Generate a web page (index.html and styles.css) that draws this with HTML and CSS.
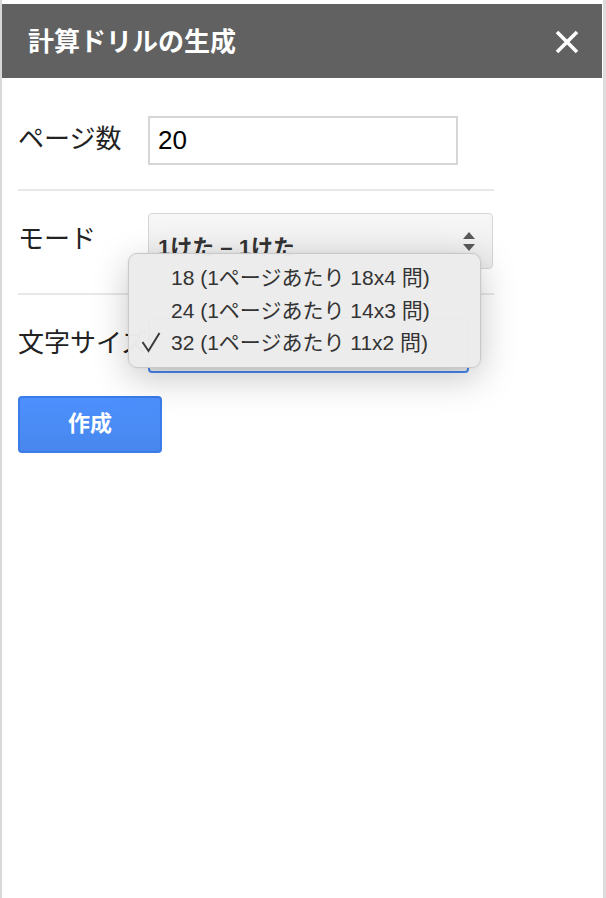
FILE: index.html
```html
<!DOCTYPE html>
<html lang="ja">
<head>
<meta charset="utf-8">
<title>計算ドリルの生成</title>
<link rel="stylesheet" href="styles.css">
</head>
<body>
<div class="frame">
  <header class="titlebar">
    <h1 class="title">計算ドリルの生成</h1>
    <svg class="close" width="24" height="24" viewBox="0 0 24 24" aria-label="閉じる">
      <path d="M2 2 L22 22 M22 2 L2 22" stroke="#fff" stroke-width="3.6" fill="none"/>
    </svg>
  </header>
  <main class="content">
    <div class="row">
      <span class="label">ページ数</span>
      <div class="input">20</div>
    </div>
    <div class="sep"></div>
    <div class="row">
      <span class="label">モード</span>
      <div class="select">
        <span class="select-text">1けた – 1けた</span>
        <svg class="spin" width="14" height="22" viewBox="0 0 14 22">
          <path d="M7 1 L13 8 L1 8 Z" fill="#5a5a5a"/>
          <path d="M1 13 L13 13 L7 20 Z" fill="#5a5a5a"/>
        </svg>
      </div>
    </div>
    <div class="sep"></div>
    <div class="row">
      <span class="label">文字サイズ</span>
      <div class="field">
        <div class="select focused"></div>
        <ul class="menu">
          <li class="item"><span class="check"></span>18 (1ページあたり 18x4 問)</li>
          <li class="item"><span class="check"></span>24 (1ページあたり 14x3 問)</li>
          <li class="item"><span class="check"><svg width="20" height="22" viewBox="0 0 20 22"><path d="M1.5 11 L7.5 20 L18.5 2" stroke="#3a3a3a" stroke-width="2" fill="none"/></svg></span>32 (1ページあたり 11x2 問)</li>
        </ul>
      </div>
    </div>
    <button class="action">作成</button>
  </main>
</div>
</body>
</html>
```
FILE: styles.css
```css
html, body {
  margin: 0;
  padding: 0;
  background: #fff;
}
body {
  font-family: "Liberation Sans", "Noto Sans CJK JP", sans-serif;
  color: #222;
}
.frame {
  box-sizing: border-box;
  min-height: 898px;
  border-left: 2px solid #d8d8d8;
  border-right: 3px solid #dcdcdc;
  padding: 4px 1px 0 0;
}
.titlebar {
  height: 74px;
  background: #616161;
  display: flex;
  align-items: center;
  justify-content: space-between;
  padding: 2px 23px 0 26px;
  box-sizing: border-box;
}
.title {
  margin: 0;
  font-size: 26px;
  font-weight: 700;
  color: #fff;
  line-height: 1;
}
.close {
  display: block;
}
.content {
  padding: 38px 0 0 16px;
  width: 476px;
}
.row {
  display: grid;
  grid-template-columns: 130px 1fr;
  align-items: center;
}
.label {
  font-size: 26px;
  line-height: 30px;
  margin-top: -4px;
  white-space: nowrap;
  color: #222;
}
.input {
  box-sizing: border-box;
  width: 310px;
  height: 49px;
  border: 2px solid #d6d6d6;
  font-size: 26px;
  line-height: 45px;
  padding-left: 8px;
  color: #000;
}
.sep {
  height: 2px;
  background: #e8e8e8;
  margin: 24px 0 22px;
}
.select {
  box-sizing: border-box;
  position: relative;
  width: 345px;
  height: 56px;
  border: 1px solid #d6d6d6;
  border-radius: 4px;
  background: linear-gradient(#f7f7f7, #ececec);
  display: flex;
  align-items: center;
  padding: 8px 0 0 9px;
}
.select-text {
  font-size: 22px;
  font-weight: 700;
  color: #333;
}
.spin {
  position: absolute;
  right: 16px;
  top: 17px;
}
.field {
  position: relative;
}
.select.focused {
  width: 321px;
  border: 2px solid #4a88f2;
  border-radius: 4px;
  background: #f0f0f0;
}
.menu {
  position: absolute;
  left: -20px;
  top: -64px;
  width: 353px;
  box-sizing: border-box;
  margin: 0;
  padding: 6px 0 9px;
  list-style: none;
  background: rgba(236, 236, 236, 0.98);
  border: 1px solid #c9c9c9;
  border-radius: 9px;
  box-shadow: 0 10px 36px rgba(0, 0, 0, 0.22), 0 0 2px rgba(0, 0, 0, 0.1);
  z-index: 5;
}
.item {
  display: flex;
  align-items: center;
  height: 32.5px;
  font-size: 21px;
  color: #333;
  white-space: nowrap;
}
.check {
  width: 42px;
  display: flex;
  justify-content: flex-end;
  padding-right: 10px;
  box-sizing: border-box;
}
.check svg {
  display: block;
  margin-top: 2px;
}
.action {
  display: block;
  margin-top: 23px;
  width: 144px;
  height: 57px;
  border: 2px solid #3b7ce9;
  border-radius: 4px;
  background: linear-gradient(#4d90fe, #4787ed);
  color: #fff;
  font-family: "Liberation Sans", "Noto Sans CJK JP", sans-serif;
  font-size: 22px;
  font-weight: 700;
  padding: 0 0 8px;
}
```
